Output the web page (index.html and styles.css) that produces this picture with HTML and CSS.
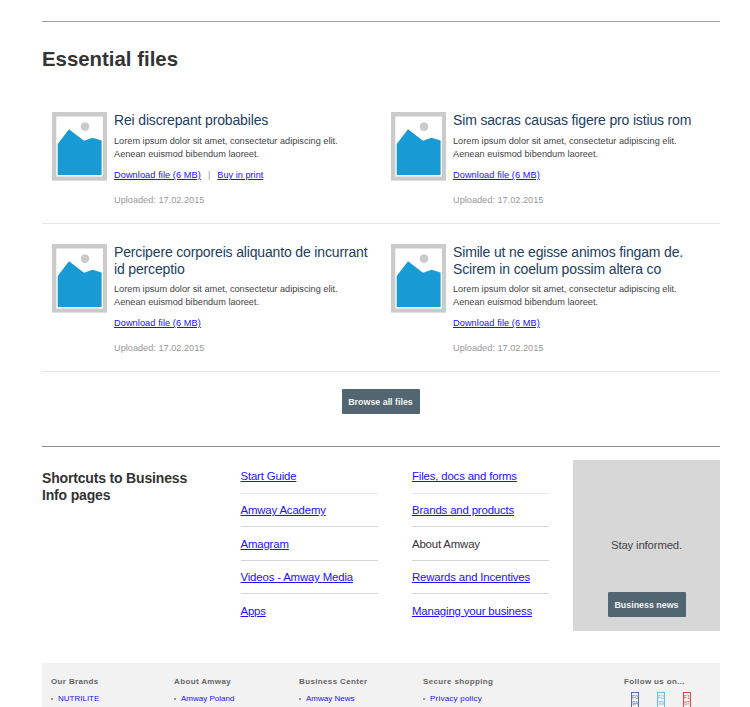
FILE: index.html
```html
<!DOCTYPE html>
<html lang="en">
<head>
<meta charset="utf-8">
<title>Essential files</title>
<link rel="stylesheet" href="styles.css">
</head>
<body>
<svg width="0" height="0" class="defs">
  <symbol id="thumb" viewBox="0 0 55 69">
    <rect width="55" height="68.6" fill="#cbcbcb"/>
    <rect x="4.3" y="4.5" width="46.6" height="60" fill="#fff"/>
    <circle cx="33" cy="14.6" r="4.3" fill="#cbcbcb"/>
    <path d="M5.7 32 17 17.3 32 28.7 40.5 25.7 49.6 28.5V63H5.7Z" fill="#189bd5"/>
  </symbol>
</svg>
<main class="page">
  <section class="files">
    <h1>Essential files</h1>
    <div class="row row-first">
      <article class="card">
        <svg class="thumb"><use href="#thumb"/></svg>
        <div class="info">
          <h2>Rei discrepant probabiles</h2>
          <p class="desc">Lorem ipsum dolor sit amet, consectetur adipiscing elit.<br>Aenean euismod bibendum laoreet.</p>
          <p class="actions"><a href="#">Download file (6 MB)</a><span class="sep">|</span><a href="#" class="buy">Buy in print</a></p>
          <p class="date">Uploaded: 17.02.2015</p>
        </div>
      </article>
      <article class="card">
        <svg class="thumb"><use href="#thumb"/></svg>
        <div class="info">
          <h2>Sim sacras causas figere pro istius rom</h2>
          <p class="desc">Lorem ipsum dolor sit amet, consectetur adipiscing elit.<br>Aenean euismod bibendum laoreet.</p>
          <p class="actions"><a href="#">Download file (6 MB)</a></p>
          <p class="date">Uploaded: 17.02.2015</p>
        </div>
      </article>
    </div>
    <div class="row row-tall">
      <article class="card">
        <svg class="thumb"><use href="#thumb"/></svg>
        <div class="info">
          <h2>Percipere corporeis aliquanto de incurrant<br>id perceptio</h2>
          <p class="desc">Lorem ipsum dolor sit amet, consectetur adipiscing elit.<br>Aenean euismod bibendum laoreet.</p>
          <p class="actions"><a href="#">Download file (6 MB)</a></p>
          <p class="date">Uploaded: 17.02.2015</p>
        </div>
      </article>
      <article class="card">
        <svg class="thumb"><use href="#thumb"/></svg>
        <div class="info">
          <h2>Simile ut ne egisse animos fingam de.<br>Scirem in coelum possim altera co</h2>
          <p class="desc">Lorem ipsum dolor sit amet, consectetur adipiscing elit.<br>Aenean euismod bibendum laoreet.</p>
          <p class="actions"><a href="#">Download file (6 MB)</a></p>
          <p class="date">Uploaded: 17.02.2015</p>
        </div>
      </article>
    </div>
    <div class="more"><a href="#" class="button">Browse all files</a></div>
  </section>
  <section class="shortcuts">
    <h3>Shortcuts to Business<br>Info pages</h3>
    <ul class="links">
      <li><a href="#">Start Guide</a></li>
      <li><a href="#">Amway Academy</a></li>
      <li><a href="#">Amagram</a></li>
      <li><a href="#">Videos - Amway Media</a></li>
      <li><a href="#">Apps</a></li>
    </ul>
    <ul class="links">
      <li><a href="#">Files, docs and forms</a></li>
      <li><a href="#">Brands and products</a></li>
      <li>About Amway</li>
      <li><a href="#">Rewards and Incentives</a></li>
      <li><a href="#">Managing your business</a></li>
    </ul>
    <aside class="news">
      <p>Stay informed.</p>
      <a href="#" class="button">Business news</a>
    </aside>
  </section>
  <footer class="footer">
    <div><h4>Our Brands</h4><a href="#">NUTRILITE</a></div>
    <div><h4>About Amway</h4><a href="#">Amway Poland</a></div>
    <div><h4>Business Center</h4><a href="#">Amway News</a></div>
    <div><h4>Secure shopping</h4><a href="#" class="wide">Privacy policy</a></div>
    <div class="follow">
      <h4>Follow us on...</h4>
      <div class="social">
        <span class="glyph facebook"><b>F0</b><b>9A</b></span>
        <span class="glyph twitter"><b>F0</b><b>99</b></span>
        <span class="glyph youtube"><b>F1</b><b>67</b></span>
      </div>
    </div>
  </footer>
</main>
</body>
</html>
```
FILE: styles.css
```css
* { box-sizing: border-box; margin: 0; padding: 0; }
html, body { height: 707px; overflow: hidden; }
body { background: #fff; color: #444; font-family: "Liberation Sans", Arial, sans-serif; font-size: 9.2px; }
a { color: #2010ff; }
.defs { display: block; }
.page { width: 678px; margin: 21px 0 0 42px; }
.files { border-top: 1px solid #a2a2a2; height: 425px; }
h1 { font-size: 20.4px; line-height: 24px; color: #333; padding-top: 25px; height: 69px; }
.row { display: grid; grid-template-columns: 339px 339px; border-bottom: 1px solid #e6e6e6; }
.row-first { height: 133px; padding-top: 21px; }
.row-tall { height: 148px; padding-top: 20px; }
.card { display: flex; padding-left: 10px; }
.thumb { width: 55px; height: 69px; flex: none; }
.info { padding-left: 7px; white-space: nowrap; }
h2 { font-size: 14px; letter-spacing: -0.155px; font-weight: 400; line-height: 17px; color: #21405f; margin-bottom: 6px; }
.row-tall h2 { margin-bottom: 5px; }
.desc { line-height: 13px; }
.actions { line-height: 12px; margin-top: 8px; letter-spacing: 0.08px; }
.sep { color: #999; margin: 0 7px; }
.buy { letter-spacing: 0; }
.date { color: #999; line-height: 12px; margin-top: 13px; }
.more { display: flex; justify-content: center; padding-top: 17px; }
.button { display: flex; align-items: center; justify-content: center; width: 78px; height: 25px; background: #526672; color: #f1f3f4; font-size: 8.9px; font-weight: 700; text-decoration: none; border-radius: 1px; }
.more .button { margin-right: 1px; }
.shortcuts { border-top: 1px solid #8f8f8f; height: 217px; padding-top: 13px; display: grid; grid-template-columns: 198.5px 171.5px 161px 147px; align-items: start; }
h3 { font-size: 14px; letter-spacing: -0.17px; line-height: 17px; color: #333; padding-top: 10px; }
.links { list-style: none; width: 137px; font-size: 11.4px; letter-spacing: -0.16px; line-height: 14px; color: #333; white-space: nowrap; }
.links li { height: 33.5px; padding-top: 9.5px; border-bottom: 1px solid #d5d5d5; }
.links li:first-child { border-bottom-color: #e6e6e6; padding-top: 9px; }
.links li:last-child { border-bottom: 0; }
.news { height: 171px; background: #d7d7d7; display: flex; flex-direction: column; align-items: center; padding-top: 78px; font-size: 11.4px; letter-spacing: -0.17px; line-height: 14px; }
.news .button { margin-top: 40px; letter-spacing: 0; }
.footer { height: 60px; background: #f2f2f2; display: grid; grid-template-columns: 123px 125px 124px 201px 96px; padding: 13px 0 0 9px; font-size: 8px; }
h4 { font-size: 8px; line-height: 12px; letter-spacing: 0.36px; color: #666; white-space: nowrap; }
.footer a { display: flex; align-items: center; margin-top: 5px; line-height: 12px; text-decoration: none; white-space: nowrap; }
.footer a::before { content: ""; width: 2px; height: 2px; background: #999; margin-right: 5px; }
.footer .wide { letter-spacing: 0.22px; }
.social { display: flex; gap: 18px; padding: 4px 0 0 7px; }
.glyph { width: 8px; height: 18px; border: 1px solid; display: flex; flex-direction: column; align-items: center; padding-top: 1px; overflow: hidden; font-size: 5px; line-height: 6px; }
.glyph b { font-weight: 400; }
.facebook { color: #536bb3; }
.twitter { color: #70b9ec; }
.youtube { color: #e94646; }
```
